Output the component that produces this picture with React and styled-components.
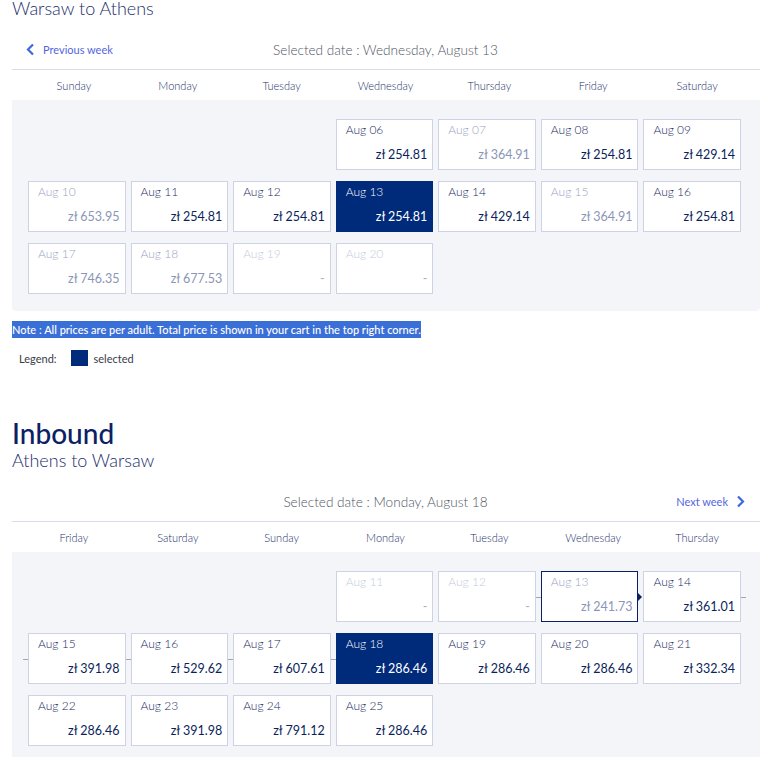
import React from "react";
import styled, { createGlobalStyle, css } from "styled-components";

const GlobalStyle = createGlobalStyle`
  html, body { margin: 0; padding: 0; background: #ffffff; }
  body { font-family: "Lato", "Liberation Sans", sans-serif; color: #0b1f5b; }
  * { box-sizing: border-box; }
`;

const NAVY = "#002a7a";

const Page = styled.div`
  padding: 0 9px 0 12px;
  width: 769px;
`;

const Section = styled.section`
  display: flex;
  flex-direction: column;
`;

const Heading = styled.h2`
  margin: 50px 0 0;
  font-size: 28px;
  line-height: 34px;
  font-weight: 500;
  color: #0c2064;
`;

const Route = styled.div`
  font-size: 18px;
  line-height: 22px;
  font-weight: 300;
  color: #1b2d6b;
  margin-top: ${(p) => (p.$first ? "-3px" : "-1px")};
`;

const Nav = styled.div`
  margin-top: 11px;
  height: 40px;
  display: grid;
  grid-template-columns: 1fr auto 1fr;
  align-items: center;
  border-bottom: 1px solid #d9dbe6;
  padding: 0 15px 0 14px;
`;

const WeekLink = styled.a`
  display: inline-flex;
  align-items: center;
  gap: 8px;
  font-size: 11px;
  color: #5366e0;
  cursor: pointer;
  justify-self: ${(p) => (p.$right ? "end" : "start")};
  svg { display: block; }
`;

const SelectedDate = styled.div`
  font-size: 13.6px;
  font-weight: 300;
  color: #50555f;
`;

const DayHeader = styled.div`
  display: grid;
  grid-template-columns: repeat(7, 1fr);
  height: 30px;
  align-items: center;
  padding: 0 11px 0 10px;
`;

const DayName = styled.div`
  text-align: center;
  font-size: 11px;
  font-weight: 300;
  color: #1d2f6a;
`;

const Panel = styled.div`
  background: #f4f5f9;
  border-radius: 0 0 4px 4px;
  padding: 19px 19px 17px 16px;
  display: grid;
  grid-template-columns: repeat(7, 1fr);
  grid-auto-rows: 51px;
  column-gap: 5px;
  row-gap: 11px;
`;

const line = css`
  content: "";
  position: absolute;
  top: 50%;
  height: 1px;
  width: 5px;
  background: #a3a6b0;
`;

const Cell = styled.div`
  position: relative;
  display: flex;
  flex-direction: column;
  justify-content: space-between;
  padding: 2px 5px 6px 9px;
  background: ${(p) => (p.$state === "selected" ? NAVY : "#ffffff")};
  border: 1px solid
    ${(p) =>
      p.$state === "selected" ? NAVY : p.$outbound ? "#0c2064" : "#cdd3e4"};
  grid-column-start: ${(p) => p.$start || "auto"};
  cursor: pointer;

  ${(p) =>
    p.$lead &&
    css`
      &::before {
        ${line};
        left: -6px;
      }
    `}
  ${(p) =>
    p.$tail &&
    css`
      &::after {
        ${line};
        right: -6px;
      }
    `}
  ${(p) =>
    p.$arrow &&
    css`
      &::after {
        content: "";
        position: absolute;
        top: 50%;
        right: -5px;
        transform: translateY(-50%);
        border-left: 4px solid #0c2064;
        border-top: 4px solid transparent;
        border-bottom: 4px solid transparent;
      }
    `}
`;

const tone = {
  selected: { date: "#ffffff", price: "#ffffff" },
  open: { date: "#1a2a64", price: "#0b1f5b" },
  dim: { date: "#9aa3bf", price: "#8b96b6" },
  none: { date: "#c6ccdc", price: "#aab1c6" },
};

const CellDate = styled.div`
  font-size: 12px;
  line-height: 16px;
  font-weight: 300;
  color: ${(p) => tone[p.$state].date};
`;

const CellPrice = styled.div`
  text-align: right;
  font-size: 12.5px;
  line-height: 16px;
  font-weight: 400;
  color: ${(p) => tone[p.$state].price};
`;

const Note = styled.div`
  margin-top: 10px;
  width: fit-content;
  background: #3a6fd8;
  color: #ffffff;
  font-size: 11px;
  line-height: 17px;
  font-weight: 500;
`;

const Legend = styled.div`
  margin-top: 12px;
  display: flex;
  align-items: center;
  height: 16px;
  padding-left: 7px;
  font-size: 11px;
  color: #3a3d48;
`;

const Swatch = styled.span`
  width: 17px;
  height: 16px;
  background: ${NAVY};
  margin: 0 6px 0 14px;
`;

const ChevronLeft = () => (
  <svg width="9" height="13" viewBox="0 0 9 13">
    <polyline points="7,1.5 2,6.5 7,11.5" fill="none" stroke="#3c68de" strokeWidth="2.2" />
  </svg>
);

const ChevronRight = () => (
  <svg width="9" height="13" viewBox="0 0 9 13">
    <polyline points="2,1.5 7,6.5 2,11.5" fill="none" stroke="#3c68de" strokeWidth="2.2" />
  </svg>
);

const outboundDays = [
  { d: "Aug 06", p: "254.81", s: "open", start: 4 },
  { d: "Aug 07", p: "364.91", s: "dim" },
  { d: "Aug 08", p: "254.81", s: "open" },
  { d: "Aug 09", p: "429.14", s: "open" },
  { d: "Aug 10", p: "653.95", s: "dim" },
  { d: "Aug 11", p: "254.81", s: "open" },
  { d: "Aug 12", p: "254.81", s: "open" },
  { d: "Aug 13", p: "254.81", s: "selected" },
  { d: "Aug 14", p: "429.14", s: "open" },
  { d: "Aug 15", p: "364.91", s: "dim" },
  { d: "Aug 16", p: "254.81", s: "open" },
  { d: "Aug 17", p: "746.35", s: "dim" },
  { d: "Aug 18", p: "677.53", s: "dim" },
  { d: "Aug 19", p: null, s: "none" },
  { d: "Aug 20", p: null, s: "none" },
];

const inboundDays = [
  { d: "Aug 11", p: null, s: "none", start: 4 },
  { d: "Aug 12", p: null, s: "none" },
  { d: "Aug 13", p: "241.73", s: "dim", outbound: true, lead: true, arrow: true },
  { d: "Aug 14", p: "361.01", s: "open", tail: true },
  { d: "Aug 15", p: "391.98", s: "open", lead: true },
  { d: "Aug 16", p: "529.62", s: "open", lead: true },
  { d: "Aug 17", p: "607.61", s: "open", lead: true },
  { d: "Aug 18", p: "286.46", s: "selected", lead: true },
  { d: "Aug 19", p: "286.46", s: "open" },
  { d: "Aug 20", p: "286.46", s: "open" },
  { d: "Aug 21", p: "332.34", s: "open" },
  { d: "Aug 22", p: "286.46", s: "open" },
  { d: "Aug 23", p: "391.98", s: "open" },
  { d: "Aug 24", p: "791.12", s: "open" },
  { d: "Aug 25", p: "286.46", s: "open" },
];

const Calendar = ({ days, names }) => (
  <>
    <DayHeader>
      {names.map((n) => (
        <DayName key={n}>{n}</DayName>
      ))}
    </DayHeader>
    <Panel>
      {days.map((c) => (
        <Cell
          key={c.d}
          $state={c.s}
          $start={c.start}
          $outbound={c.outbound}
          $lead={c.lead}
          $tail={c.tail}
          $arrow={c.arrow}
        >
          <CellDate $state={c.s}>{c.d}</CellDate>
          <CellPrice $state={c.s}>{c.p ? `zł ${c.p}` : "-"}</CellPrice>
        </Cell>
      ))}
    </Panel>
  </>
);

export default function App() {
  return (
    <Page>
      <GlobalStyle />
      <Section>
        <Route $first>Warsaw to Athens</Route>
        <Nav>
          <WeekLink>
            <ChevronLeft />
            Previous week
          </WeekLink>
          <SelectedDate>Selected date : Wednesday, August 13</SelectedDate>
          <span />
        </Nav>
        <Calendar
          days={outboundDays}
          names={["Sunday", "Monday", "Tuesday", "Wednesday", "Thursday", "Friday", "Saturday"]}
        />
        <Note>Note : All prices are per adult. Total price is shown in your cart in the top right corner.</Note>
        <Legend>
          Legend:
          <Swatch />
          selected
        </Legend>
      </Section>
      <Section>
        <Heading>Inbound</Heading>
        <Route>Athens to Warsaw</Route>
        <Nav>
          <span />
          <SelectedDate>Selected date : Monday, August 18</SelectedDate>
          <WeekLink $right>
            Next week
            <ChevronRight />
          </WeekLink>
        </Nav>
        <Calendar
          days={inboundDays}
          names={["Friday", "Saturday", "Sunday", "Monday", "Tuesday", "Wednesday", "Thursday"]}
        />
      </Section>
    </Page>
  );
}
